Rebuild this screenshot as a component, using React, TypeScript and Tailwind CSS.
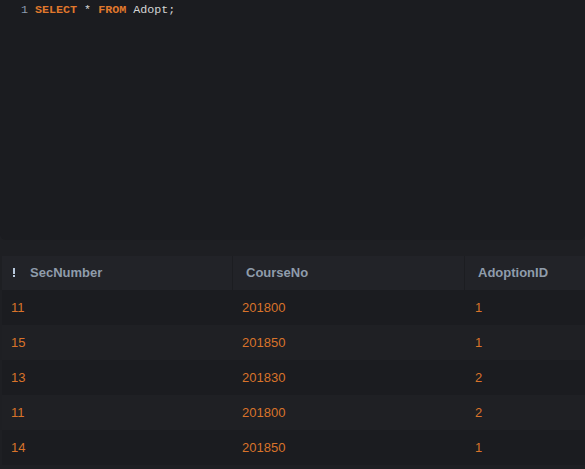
const rows = [
  { sec: "11", course: "201800", adoption: "1" },
  { sec: "15", course: "201850", adoption: "1" },
  { sec: "13", course: "201830", adoption: "2" },
  { sec: "11", course: "201800", adoption: "2" },
  { sec: "14", course: "201850", adoption: "1" },
];

function GripIcon() {
  return (
    <svg width="4" height="10" viewBox="0 0 4 10" className="shrink-0">
      <rect x="1" y="0" width="2" height="6" fill="#b8c8dc" />
      <rect x="1" y="7" width="2" height="2" fill="#b8c8dc" />
    </svg>
  );
}

export default function App() {
  return (
    <div className="h-[469px] w-[585px] overflow-hidden bg-[#1e1f23]">
      {/* editor */}
      <div className="h-[240px] rounded-b-md bg-[#1b1c20] pt-[3px] font-['Liberation_Mono',monospace] text-[11.7px] leading-[14px]">
        <div className="flex pl-[21px]">
          <span className="w-[14px] text-[#8b9bb0]">1</span>
          <span className="font-bold text-[#e0782c]">SELECT</span>
          <span className="whitespace-pre text-[#d4d4d4]"> * </span>
          <span className="font-bold text-[#e0782c]">FROM</span>
          <span className="whitespace-pre text-[#d4d4d4]"> Adopt;</span>
        </div>
      </div>

      {/* results */}
      <div className="mt-[16px] pl-[2px] font-['Liberation_Sans',Arial,sans-serif] text-[13px]">
        <div className="grid h-[34px] grid-cols-[231px_232px_1fr] bg-[#222328] font-bold text-[#8f9cab]">
          <div className="flex items-center gap-[14px] border-r border-[#1c1d21] pl-[10px]">
            <GripIcon />
            <span>SecNumber</span>
          </div>
          <div className="flex items-center border-r border-[#1c1d21] pl-[13px]">CourseNo</div>
          <div className="flex items-center pl-[13px]">AdoptionID</div>
        </div>
        {rows.map((r, i) => (
          <div
            key={i}
            className={`grid h-[35px] grid-cols-[231px_232px_1fr] items-center text-[#d9732a] ${
              i % 2 === 0 ? "bg-[#1b1c20]" : "bg-[#1f2024]"
            }`}
          >
            <div className="pl-[9px]">{r.sec}</div>
            <div className="pl-[9px]">{r.course}</div>
            <div className="pl-[10px]">{r.adoption}</div>
          </div>
        ))}
      </div>
    </div>
  );
}
